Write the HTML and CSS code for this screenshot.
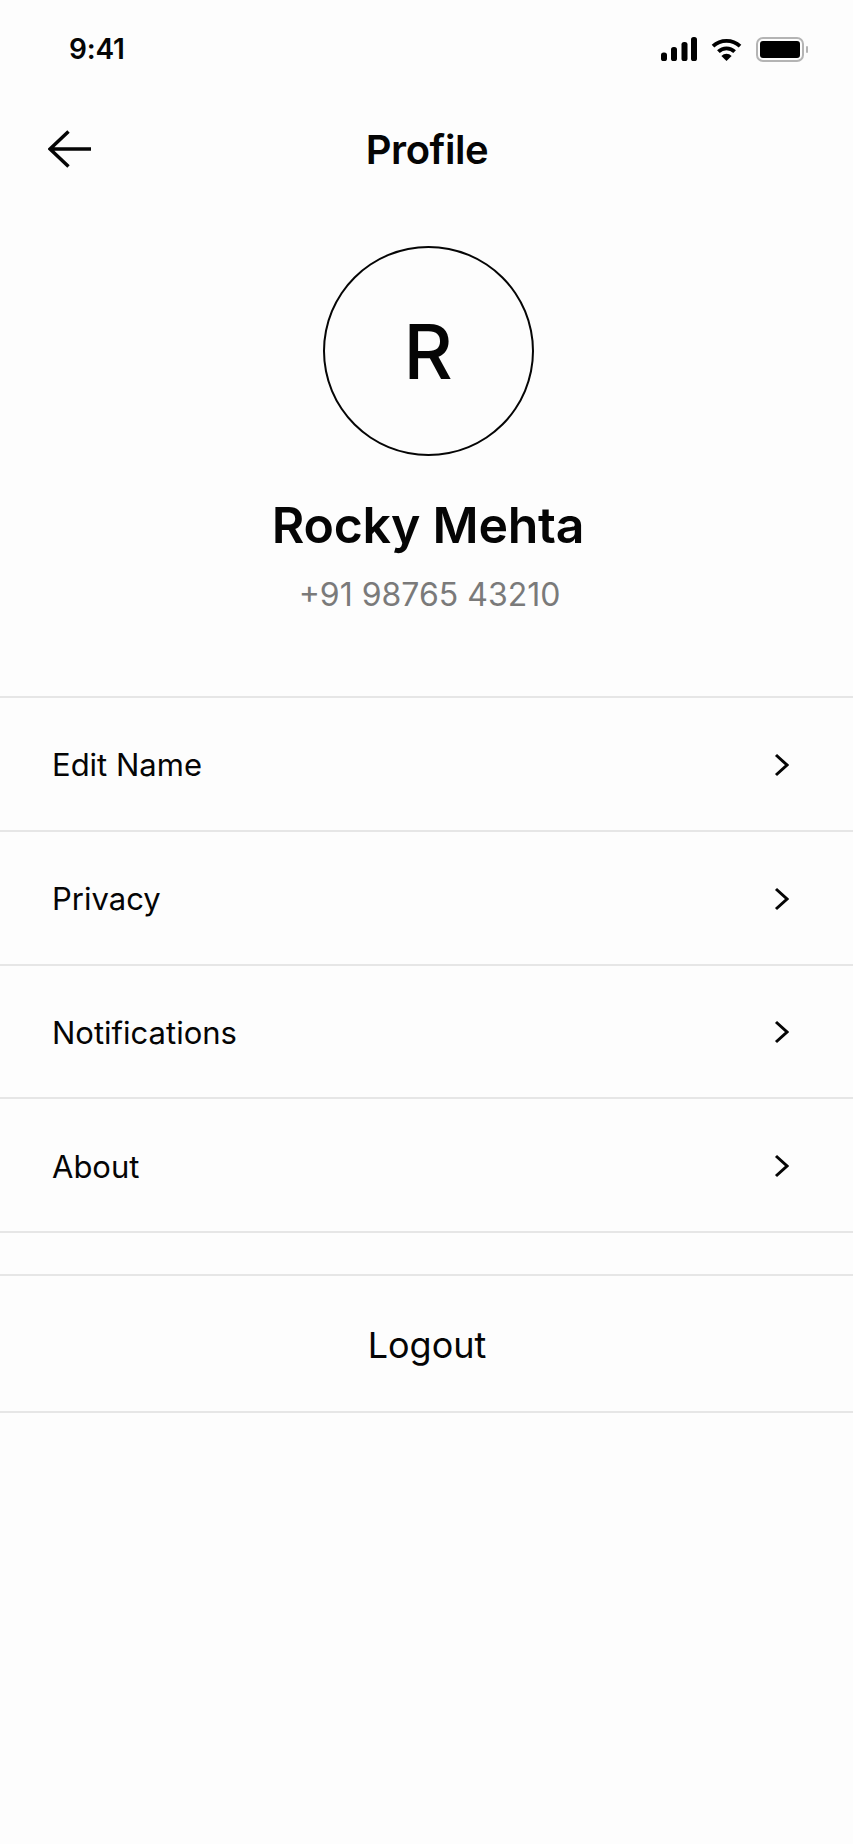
FILE: index.html
```html
<!DOCTYPE html>
<html lang="en">
<head>
<meta charset="utf-8">
<title>Profile</title>
<link rel="stylesheet" href="styles.css">
</head>
<body>
<div class="screen">
  <header class="status">
    <span class="time">9:41</span>
    <div class="status-icons">
      <svg class="signal" viewBox="0 0 36 24" aria-hidden="true">
        <rect x="0" y="15.5" width="6" height="8.5" rx="2.6"/>
        <rect x="10" y="10" width="6" height="14" rx="2.6"/>
        <rect x="20.5" y="5" width="6" height="19" rx="2.6"/>
        <rect x="30" y="0" width="6" height="24" rx="2.6"/>
      </svg>
      <svg class="wifi" viewBox="0 0 31 24" aria-hidden="true">
        <path class="wifi-arc" d="M2 9.2A19.6 19.6 0 0 1 29 9.2"/>
        <path class="wifi-arc" d="M7.4 14.6A11.6 11.6 0 0 1 23.6 14.6"/>
        <path d="M15.5 24L10.4 18.9A7.2 7.2 0 0 1 20.6 18.9Z"/>
      </svg>
      <div class="battery"><div class="battery-fill"></div></div>
      <div class="battery-nub"></div>
    </div>
  </header>

  <nav class="nav">
    <svg class="back" viewBox="0 0 44 38" aria-hidden="true">
      <path d="M43 19H3M20.5 1.5L2 19L20.5 36.5"/>
    </svg>
    <h1 class="title">Profile</h1>
  </nav>

  <section class="profile">
    <div class="avatar">R</div>
    <h2 class="name">Rocky Mehta</h2>
    <p class="phone">+91 98765 43210</p>
  </section>

  <ul class="menu">
    <li class="row"><span>Edit Name</span><svg class="chev" viewBox="0 0 15 24" aria-hidden="true"><path d="M2 2L13 12L2 22"/></svg></li>
    <li class="row"><span>Privacy</span><svg class="chev" viewBox="0 0 15 24" aria-hidden="true"><path d="M2 2L13 12L2 22"/></svg></li>
    <li class="row"><span>Notifications</span><svg class="chev" viewBox="0 0 15 24" aria-hidden="true"><path d="M2 2L13 12L2 22"/></svg></li>
    <li class="row"><span>About</span><svg class="chev" viewBox="0 0 15 24" aria-hidden="true"><path d="M2 2L13 12L2 22"/></svg></li>
  </ul>

  <div class="logout">Logout</div>
</div>
</body>
</html>
```

FILE: styles.css
```css
* { box-sizing: border-box; }
html, body { margin: 0; padding: 0; background: #fdfdfd; }
.screen {
  width: 853px;
  height: 1844px;
  overflow: hidden;
  background: #fdfdfd;
  color: #050505;
  font-family: Inter, "Liberation Sans", sans-serif;
}
.status {
  height: 98px;
  display: flex;
  align-items: center;
  justify-content: space-between;
  padding: 0 45px 0 69px;
}
.time { font-size: 28px; font-weight: 600; letter-spacing: -0.2px; }
.status-icons { display: flex; align-items: center; }
.signal { width: 36px; height: 24px; fill: #000; margin-right: 14px; }
.wifi { width: 31px; height: 24px; fill: #000; margin-right: 14px; }
.wifi-arc { fill: none; stroke: #000; stroke-width: 3.8; }
.battery {
  width: 48px;
  height: 25px;
  border: 2px solid #b4b4b4;
  border-radius: 7px;
  padding: 2px;
}
.battery-fill { width: 100%; height: 100%; background: #000; border-radius: 3px; }
.battery-nub { width: 2px; height: 7px; background: #b4b4b4; margin-left: 2px; border-radius: 1px; }

.nav {
  height: 102px;
  padding-left: 1px;
  display: flex;
  align-items: center;
  justify-content: center;
  position: relative;
}
.back {
  position: absolute;
  left: 48px;
  top: 32px;
  width: 44px;
  height: 38px;
  fill: none;
  stroke: #050505;
  stroke-width: 3.5;
}
.title { margin: 0; font-size: 40px; font-weight: 600; letter-spacing: -0.4px; }

.profile {
  height: 496px;
  padding: 46px 0 0 3px;
  display: flex;
  flex-direction: column;
  align-items: center;
}
.avatar {
  width: 211px;
  height: 210px;
  border: 2px solid #050505;
  border-radius: 50%;
  display: flex;
  align-items: center;
  justify-content: center;
  font-size: 76px;
  font-weight: 500;
}
.name { margin: 40px 0 0; font-size: 50px; line-height: 58px; font-weight: 600; letter-spacing: -0.25px; }
.phone { margin: 21px 0 0 3px; font-size: 32px; line-height: 40px; color: #7a7a7a; }

.menu { list-style: none; margin: 0; padding: 0; border-top: 2px solid #e6e6e6; }
.row {
  height: 133.75px;
  border-bottom: 2px solid #e6e6e6;
  display: flex;
  align-items: center;
  justify-content: space-between;
  padding: 2px 64px 0 52px;
  font-size: 31px;
}
.chev { width: 15px; height: 24px; fill: none; stroke: #050505; stroke-width: 3; }
.logout {
  margin-top: 41px;
  height: 139px;
  padding: 2px 0 0 1px;
  border-top: 2px solid #e6e6e6;
  border-bottom: 2px solid #e6e6e6;
  display: flex;
  align-items: center;
  justify-content: center;
  font-size: 36px;
}
```
